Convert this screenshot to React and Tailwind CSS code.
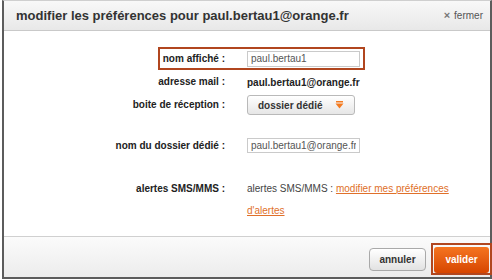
import React from "react";

const Arrow = () => (
    <svg width="9" height="8" viewBox="0 0 9 8" className="block">
        <rect x="1" y="0" width="7" height="1.5" fill="#f47b20" />
        <path d="M0.5 2.5 H8.5 L4.5 7.5 Z" fill="#f47b20" />
    </svg>
);

const Label = ({ children, className = "" }) => (
    <div className={"text-right text-[10px] font-bold text-[#222] leading-none " + className}>{children}</div>
);

const App = () => {
    return (
        <div className="w-[492px] h-[280px] bg-white pl-[2px] font-['Liberation_Sans',Arial,sans-serif]">
            <div className="w-[490px] h-[279px] border-x-2 border-b-2 border-[#5c5c5c] border-t border-t-[#cfcfcf] flex flex-col">
                {/* header */}
                <div className="h-[30px] shrink-0 flex items-center justify-between pl-[12px] pr-[7px] bg-gradient-to-b from-[#f8f8f8] to-[#e8e8e8] border-b border-[#c9c9c9]">
                    <h1 className="text-[13px] font-bold text-[#333] leading-none">
                        modifier les préférences pour paul.bertau1@orange.fr
                    </h1>
                    <a href="#" className="flex items-center gap-[4px] text-[10px] text-[#555] leading-none">
                        <span className="text-[11px] font-bold text-[#777]">×</span>
                        fermer
                    </a>
                </div>

                {/* body */}
                <div className="flex-1 bg-white pt-[16px]">
                    <div className="ml-[154px] w-[207px] h-[23px] border-2 border-[#b1461f] flex items-center">
                        <Label className="w-[65px]">nom affiché :</Label>
                        <input
                            readOnly
                            value="paul.bertau1"
                            className="ml-[22px] w-[113px] h-[16px] border border-[#cacaca] px-[3px] text-[10px] text-[#555] outline-none"
                        />
                    </div>

                    <div className="mt-[1px] h-[22px] flex items-center">
                        <Label className="w-[221px]">adresse mail :</Label>
                        <span className="ml-[22px] text-[10px] font-bold text-[#222]">paul.bertau1@orange.fr</span>
                    </div>

                    <div className="mt-[2px] h-[20px] flex items-center">
                        <Label className="w-[221px]">boite de réception :</Label>
                        <div className="ml-[22px] w-[108px] h-[20px] rounded-[3px] border border-[#b9b9b9] bg-gradient-to-b from-white to-[#e6e6e6] flex items-center justify-between pl-[10px] pr-[10px]">
                            <span className="text-[10px] font-bold text-[#333]">dossier dédié</span>
                            <Arrow />
                        </div>
                    </div>

                    <div className="mt-[23px] h-[15px] flex items-center">
                        <Label className="w-[221px]">nom du dossier dédié :</Label>
                        <input
                            readOnly
                            value="paul.bertau1@orange.fr"
                            className="ml-[22px] w-[113px] h-[15px] border border-[#cacaca] px-[3px] text-[10px] text-[#555] outline-none"
                        />
                    </div>

                    <div className="mt-[25px] flex items-start">
                        <Label className="w-[221px] h-[22px] flex items-center justify-end">alertes SMS/MMS :</Label>
                        <p className="ml-[22px] w-[230px] text-[10px] text-[#444] leading-[22px]">
                            alertes SMS/MMS :{" "}
                            <a href="#" className="text-[#e0702a] underline">
                                modifier mes préférences
                                <br />
                                d'alertes
                            </a>
                        </p>
                    </div>
                </div>

                {/* footer */}
                <div className="h-[41px] shrink-0 border-t border-[#d0d0d0] bg-gradient-to-b from-[#fbfbfb] to-[#ececec] flex items-start justify-end pt-[6px]">
                    <div className="flex items-center gap-[5px] -mr-[2px]">
                        <button className="w-[57px] h-[23px] rounded-[4px] border border-[#a9a9a9] bg-gradient-to-b from-white to-[#e2e2e2] text-[10px] font-bold text-[#333]">
                            annuler
                        </button>
                        <div className="w-[61px] h-[32px] border-2 border-[#b1461f] p-[1px]">
                            <button className="w-full h-full rounded-[3px] bg-gradient-to-b from-[#f5741f] to-[#d64500] text-[10px] font-bold text-white">
                                valider
                            </button>
                        </div>
                    </div>
                </div>
            </div>
        </div>
    );
};

export default App;
